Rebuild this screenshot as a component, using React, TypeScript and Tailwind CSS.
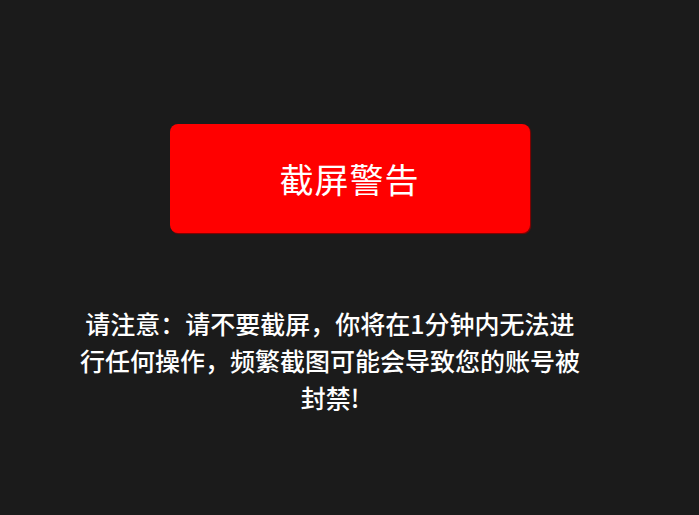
import React from 'react';

const App: React.FC = () => {
  return (
    <div
      className="w-full h-[515px] bg-[#1b1b1b] flex flex-col items-center pt-[124px] overflow-hidden"
      style={{ fontFamily: '"Noto Sans CJK SC", "Noto Sans", sans-serif' }}
    >
      <button
        type="button"
        className="w-[360px] h-[109px] rounded-lg bg-[#ff0000] shadow-[1px_1px_1px_#8a0000] text-white text-[34px] leading-none flex items-center justify-center tracking-[1px]"
      >
        截屏警告
      </button>
      <p className="mt-[72px] mr-[39px] w-[508px] text-center text-white text-[25px] font-medium leading-[37px]">
        请注意：请不要截屏，你将在1分钟内无法进行任何操作，频繁截图可能会导致您的账号被封禁!
      </p>
    </div>
  );
};

export default App;
